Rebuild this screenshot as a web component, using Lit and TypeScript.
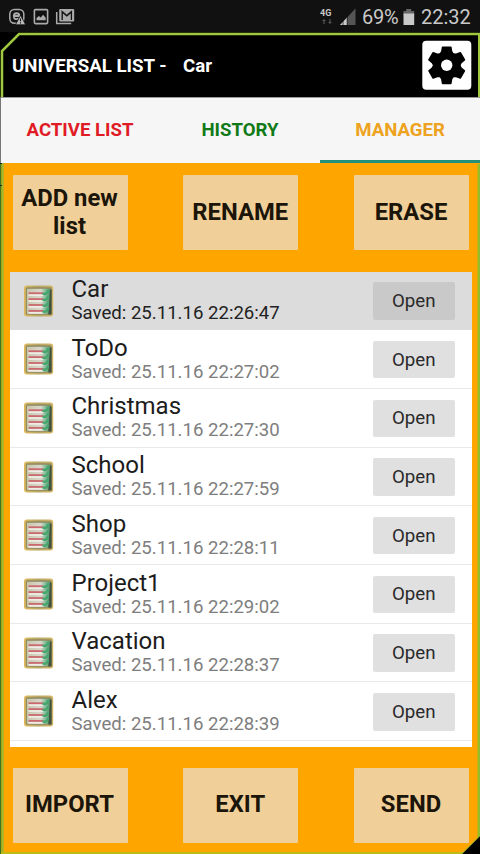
import { LitElement, html, css, svg } from "lit";
import { customElement, property } from "lit/decorators.js";
import { classMap } from "lit/directives/class-map.js";

@customElement("status-bar")
class StatusBar extends LitElement {
  static styles = css`
    :host { display: flex; align-items: center; height: 32px; background: #111; color: #c9c9c9; font: 20px/32px Roboto, sans-serif; }
    .left { flex: 1; }
    svg { display: block; }
    .pct { margin-left: 6px; padding-top: 2px; width: 37px; letter-spacing: -0.2px; }
    .batt { margin-left: 4px; }
    .clock { margin-left: 6px; padding-top: 2px; width: 59px; }
    .net { width: 14px; font: bold 9px/9px Roboto, sans-serif; }
    .net svg { margin: 1px auto 0; }
    .sig { margin-left: 5px; }
  `;
  render() {
    return html`
      <svg class="left" width="80" height="32" viewBox="0 0 80 32" preserveAspectRatio="xMinYMin">
        <rect x="9.8" y="9.4" width="14" height="13.8" rx="4.6" fill="none" stroke="#aaa" stroke-width="1.5" />
        <path d="M13.8 16h5.600c0-3.700-5.600-3.700-5.600 0s3 3.700 4.800 2.300" fill="none" stroke="#aaa" stroke-width="1.800" />
        <path d="M20.5 15.2l5.2 9.6H15.5z" fill="#bbb" stroke="#111" stroke-width=".8" />
        <path d="M20.5 18.500v2.700M20.5 22.2v1.3" stroke="#111" stroke-width="1.1" />
        <rect x="34.4" y="9.6" width="13.2" height="14" rx="1" fill="none" stroke="#aaa" stroke-width="1.6" />
        <path d="M36.5 20.3v-2.2l2.4-2 1.8 1.3 2.4-2.6 2.6 3v2.5z" fill="#aaa" />
        <path d="M56.7 12v11.5h14.5" fill="none" stroke="#aaa" stroke-width="1.5" />
        <rect x="59.2" y="9" width="15" height="12.4" rx="1" fill="#aaa" />
        <path d="M62.2 20V12l4.6 4 4.6-4v8" fill="none" stroke="#111" stroke-width="1.3" />
        <path d="M61.5 10.7l5.3 4.2 5.3-4.2" fill="none" stroke="#111" stroke-width=".7" />
      </svg>
      <div class="net">4G
        <svg width="10" height="5" viewBox="0 0 10 5"><path d="M2 0l2 2H2.6v3H1.4V2H0zM8 5l2-2H8.6V0H7.4v3H6z" fill="#555" /></svg>
      </div>
      <svg class="sig" width="17" height="32" viewBox="0 0 17 32">
        <path d="M1 25L16.5 8.5V25z" fill="#555" />
        <path d="M1 25L8 17.5V25z" fill="#c9c9c9" />
        <path d="M4 18v7M8.2 16v9" stroke="#111" stroke-width=".7" />
      </svg>
      <div class="pct">69%</div>
      <svg class="batt" width="12" height="32" viewBox="0 0 12 32">
        <path d="M3.2 9h5v2h3v4H.5v-4h2.700z" fill="#666" /><path d="M.5 13.500h10.700V25H.5z" fill="#c9c9c9" />
      </svg>
      <div class="clock">22:32</div>
    `;
  }
}

@customElement("list-row")
class ListRow extends LitElement {
  @property() name = "";
  @property() saved = "";
  @property({ type: Boolean }) active = false;
  static styles = css`
    :host { display: block; }
    .row { display: flex; height: 57.7px; border-bottom: 1px solid #e9e9e9; background: #fff; }
    .icon { flex: none; margin: 12px 17px 0 12.500px; }
    .info { flex: 1; white-space: nowrap; }
    .name { font: 24px/26px Roboto, sans-serif; color: #1c1c1c; padding-top: 4.600px; }
    .saved { font: 18.6px/22px Roboto, sans-serif; color: #7e7e7e; }
    .open { margin: 10.700px 16.500px 0 0; width: 82.500px; height: 37.500px; border: 0; border-radius: 2px; padding: 0; background: #e0e0e0; color: #2a2a2a; font: 18.7px/36px Roboto, sans-serif; }
    .active { background: #dcdcdc; border-color: #dcdcdc; }
    .active .saved { color: #222; }
    .active .open { background: #c9c9c9; }
  `;
  render() {
    return html`<div class=${classMap({ row: true, active: this.active })}>
      <svg class="icon" width="32" height="34" viewBox="0 0 32 34">
        <defs>
          <linearGradient id="edge"><stop offset="0" stop-color="#dfb95c" /><stop offset=".5" stop-color="#b8a566" /><stop offset="1" stop-color="#d3b662" /></linearGradient>
          <linearGradient id="page"><stop offset="0" stop-color="#c9c6ad" /><stop offset=".6" stop-color="#d9d7cc" /><stop offset=".78" stop-color="#8cbf9d" /><stop offset="1" stop-color="#57936c" /></linearGradient>
        </defs>
        <rect x="1" y="1.500" width="29.200" height="31" rx="3" fill="url(#edge)" />
        <rect x="2.800" y="3.200" width="25.800" height="27.600" rx="1.500" fill="#8f8c62" />
        <path d="M4 4.800h23v25H4z" fill="url(#page)" />
        <path d="M27 5.500h1.600v25h-3.300z" fill="#405240" />
        ${[0, 1, 2, 3].map((i) => {
          const y = 9.200 + i * 5.900;
          return svg`<path d="M5.500 ${y + 1.9}h15" stroke="#eeece4" stroke-width="1.800" /><path d="M5.500 ${y}h15" stroke="#c9696e" stroke-width="1.800" /><path d="M19.500 ${y + 0.5}q4 1.500 6-3.500" fill="none" stroke="#45a76f" stroke-width="2.300" />`;
        })}
      </svg>
      <div class="info"><div class="name">${this.name}</div><div class="saved">Saved: ${this.saved}</div></div>
      <button class="open">Open</button>
    </div>`;
  }
}

@customElement("app-root")
class AppRoot extends LitElement {
  static styles = css`
    :host { display: flex; flex-direction: column; position: relative; width: 480px; height: 854px; overflow: hidden; background: #ffa500; font-family: Roboto, sans-serif; }
    .header { display: flex; align-items: center; height: 65px; background: #000; color: #fff; font-size: 18.7px; font-weight: 700; padding: 0 8px 0 12px; }
    .app { width: 171px; padding-top: 2.500px; }
    .current { flex: 1; padding-top: 2.500px; }
    .tabs { display: grid; grid-template-columns: repeat(3, 1fr); height: 65px; border-top: 1px solid #999; background: #f6f6f6; font-size: 18.6px; font-weight: 700; line-height: 65px; text-align: center; }
    .tab.red { color: #e01b25; }
    .tab.green { color: #117a17; }
    .tab.amber { color: #eda220; box-shadow: inset 0 -3px #24907a; }
    .buttons { display: grid; grid-template-columns: repeat(3, 115px); justify-content: space-between; height: 75px; margin: 12px 11px 0 12.5px; }
    .big { border: 0; border-radius: 1px; padding: 0 1px 2px 0; background: #f0d098; color: #1c150a; font: 700 23.8px/28px Roboto, sans-serif; }
    .list { height: 475px; margin: 21.500px 8.500px 0 10px; background: #fff; }
    .frame { position: absolute; inset: 0; pointer-events: none; }
    .list + .buttons { margin-top: 21.500px; }
    .list + .buttons .big { padding-bottom: 3px; }
  `;
  private lists = [
    ["Car", "25.11.16 22:26:47"], ["ToDo", "25.11.16 22:27:02"],
    ["Christmas", "25.11.16 22:27:30"], ["School", "25.11.16 22:27:59"],
    ["Shop", "25.11.16 22:28:11"], ["Project1", "25.11.16 22:29:02"],
    ["Vacation", "25.11.16 22:28:37"], ["Alex", "25.11.16 22:28:39"],
  ];
  render() {
    return html`
      <status-bar></status-bar>
      <div class="header">
        <div class="app">UNIVERSAL LIST -</div><div class="current">Car</div>
        <svg width="50" height="50" viewBox="0 0 50 50">
          <rect x=".3" y=".8" width="49" height="49" rx="4" fill="#fff" />
          <g transform="translate(24.700 25.300)">
            <circle r="13.600" />
            ${[0, 60, 120, 180, 240, 300].map((a) => svg`<path transform="rotate(${a})" d="M-7.500 -11L-5.600 -14L-4.900 -18.200Q-4.800 -18.900 -4 -18.900H4Q4.800 -18.900 4.900 -18.200L5.600 -14L7.500 -11z" />`)}
            <circle r="5.700" fill="#fff" />
          </g>
        </svg>
      </div>
      <div class="tabs"><div class="tab red">ACTIVE LIST</div><div class="tab green">HISTORY</div><div class="tab amber">MANAGER</div></div>
      <div class="buttons"><button class="big">ADD new<br />list</button><button class="big">RENAME</button><button class="big">ERASE</button></div>
      <div class="list">${this.lists.map(([n, s], i) => html`<list-row .name=${n} .saved=${s} .active=${i === 0}></list-row>`)}</div>
      <div class="buttons"><button class="big">IMPORT</button><button class="big">EXIT</button><button class="big">SEND</button></div>
      <svg class="frame" width="480" height="854" viewBox="0 0 480 854">
        <path d="M2 97V51L19 34H480" fill="none" stroke="#9fc83f" stroke-width="2.500" />
        <path d="M479 35V97" stroke="#9fc83f" stroke-width="2" />
        <path d="M.5 97V163" stroke="#777" />
        <path d="M2.500 163V854" stroke="#a5b72c" stroke-width="2.500" />
        <path d="M.6 163V854" stroke="#3f741c" stroke-width="1.200" />
        <path d="M0 185.500h2M0 163.500h2" stroke="#142b08" />
        <path d="M478.800 164V854" stroke="#93bd2d" stroke-width="2.400" />
        <path d="M1 853H480" stroke="#bcbc18" stroke-width="2" />
        <path d="M462 854L480 836V854z" fill="#000" />
        <path d="M461.500 854L480 835.500" stroke="#8fb529" />
      </svg>
    `;
  }
}
